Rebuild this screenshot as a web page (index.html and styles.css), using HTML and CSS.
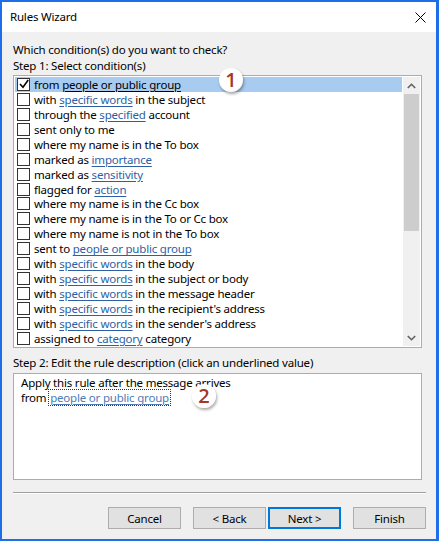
FILE: index.html
```html
<!DOCTYPE html>
<html>
<head>
<meta charset="utf-8">
<link rel="stylesheet" href="styles.css">
</head>
<body>
<div class="window">
  <div class="titlebar">
    <span class="title">Rules Wizard</span>
    <svg class="close" width="11" height="11" viewBox="0 0 11 11"><path d="M0.5 0.5 L10.5 10.5 M10.5 0.5 L0.5 10.5" stroke="#000" stroke-width="1" fill="none"/></svg>
  </div>
  <div class="content">
    <div class="label prompt">Which condition(s) do you want to check?</div>
    <div class="label">Step 1: Select condition(s)</div>
    <div class="listbox">
      <div class="rows">
        <div class="row selected"><span class="cb checked"><svg width="10" height="10" viewBox="0 0 10 10"><path d="M1 5 L4 8.2 L9.2 1" stroke="#000" stroke-width="1.6" fill="none"/></svg></span><span class="txt">from <u class="sel-link">people or public group</u></span></div>
        <div class="row"><span class="cb"></span><span class="txt">with <a>specific words</a> in the subject</span></div>
        <div class="row"><span class="cb"></span><span class="txt">through the <a>specified</a> account</span></div>
        <div class="row"><span class="cb"></span><span class="txt">sent only to me</span></div>
        <div class="row"><span class="cb"></span><span class="txt">where my name is in the To box</span></div>
        <div class="row"><span class="cb"></span><span class="txt">marked as <a>importance</a></span></div>
        <div class="row"><span class="cb"></span><span class="txt">marked as <a>sensitivity</a></span></div>
        <div class="row"><span class="cb"></span><span class="txt">flagged for <a>action</a></span></div>
        <div class="row"><span class="cb"></span><span class="txt">where my name is in the Cc box</span></div>
        <div class="row"><span class="cb"></span><span class="txt">where my name is in the To or Cc box</span></div>
        <div class="row"><span class="cb"></span><span class="txt">where my name is not in the To box</span></div>
        <div class="row"><span class="cb"></span><span class="txt">sent to <a>people or public group</a></span></div>
        <div class="row"><span class="cb"></span><span class="txt">with <a>specific words</a> in the body</span></div>
        <div class="row"><span class="cb"></span><span class="txt">with <a>specific words</a> in the subject or body</span></div>
        <div class="row"><span class="cb"></span><span class="txt">with <a>specific words</a> in the message header</span></div>
        <div class="row"><span class="cb"></span><span class="txt">with <a>specific words</a> in the recipient's address</span></div>
        <div class="row"><span class="cb"></span><span class="txt">with <a>specific words</a> in the sender's address</span></div>
        <div class="row"><span class="cb"></span><span class="txt">assigned to <a>category</a> category</span></div>
      </div>
      <div class="scrollbar">
        <div class="arrow"><svg width="9" height="6" viewBox="0 0 9 6"><path d="M0.8 5 L4.5 1.3 L8.2 5" stroke="#606060" stroke-width="1.6" fill="none"/></svg></div>
        <div class="track"><div class="thumb"></div></div>
        <div class="arrow"><svg width="9" height="6" viewBox="0 0 9 6"><path d="M0.8 1 L4.5 4.7 L8.2 1" stroke="#606060" stroke-width="1.6" fill="none"/></svg></div>
      </div>
    </div>
    <div class="label step2">Step 2: Edit the rule description (click an underlined value)</div>
    <div class="descbox">
      <div>Apply this rule after the message arrives</div>
      <div>from <span class="focus"><a class="desc-link">people or public group</a></span></div>
    </div>
    <div class="separator"></div>
    <div class="buttons">
      <button class="btn">Cancel</button>
      <button class="btn back">&lt; Back</button>
      <button class="btn default">Next &gt;</button>
      <button class="btn finish">Finish</button>
    </div>
  </div>
  <div class="badge b1">1</div>
  <div class="badge b2">2</div>
</div>
</body>
</html>
```
FILE: styles.css
```css
* { box-sizing: border-box; }
html, body { margin: 0; padding: 0; }
body {
  font-family: "Noto Sans", "DejaVu Sans", sans-serif;
  font-size: 11.5px;
  letter-spacing: -0.2px;
  color: #000;
  background: #fff;
}
.window {
  position: relative;
  width: 439px;
  height: 541px;
  background: #f0f0f0;
  border-style: solid;
  border-color: #1d6ee8;
  border-width: 2px 3px 2px 2px;
  display: flex;
  flex-direction: column;
}
.titlebar {
  height: 30px;
  background: #fff;
  display: flex;
  align-items: center;
  justify-content: space-between;
  padding: 0 10px 0 8px;
}
.title { font-size: 11.5px; line-height: 16px; }
.close { display: block; margin-top: 1px; }
.content {
  padding: 10px 0 0 11px;
  display: flex;
  flex-direction: column;
}
.label { line-height: 16px; white-space: nowrap; }
.listbox {
  margin-top: 1px;
  width: 409px;
  height: 273px;
  background: #fff;
  border: 1px solid #acacac;
  padding: 1px;
  display: flex;
}
.rows { flex: 1; display: flex; flex-direction: column; }
.row {
  height: 15px;
  line-height: 15px;
  display: flex;
  align-items: center;
  white-space: nowrap;
  padding-left: 2px;
  overflow: hidden;
}
.txt { display: block; height: 15px; line-height: 15px; }
.row.selected { background: #a8cbf0; margin-right: 1px; }
.cb {
  width: 13px;
  height: 13px;
  border: 1px solid #333;
  background: #fff;
  margin-right: 4px;
  display: flex;
  align-items: center;
  justify-content: center;
  flex: none;
}
.cb svg { display: block; }
a, .sel-link {
  color: #2c5fa5;
  text-decoration: underline;
  text-underline-offset: 2px;
}
.sel-link { color: #000; }
.scrollbar {
  width: 17px;
  background: #f0f0f0;
  display: flex;
  flex-direction: column;
}
.arrow {
  height: 17px;
  display: flex;
  align-items: center;
  justify-content: center;
}
.track { flex: 1; }
.thumb {
  margin: 0 1px;
  height: 137px;
  background: #cdcdcd;
}
.step2 { margin-top: 7px; }
.descbox {
  margin-top: 2px;
  width: 409px;
  height: 107px;
  background: #fff;
  border: 1px solid #acacac;
  padding: 1px 0 0 7px;
  line-height: 15px;
}
.focus {
  outline: 1px dotted #333;
  outline-offset: 0;
  padding: 0 1px;
}
.desc-link { color: #4c7cb8; }
.separator {
  margin-top: 12px;
  width: 413px;
  height: 2px;
  border-top: 1px solid #a0a0a0;
  border-bottom: 1px solid #fff;
}
.buttons {
  margin-top: 13px;
  width: 413px;
  display: flex;
  justify-content: flex-end;
}
.btn {
  width: 73px;
  height: 22px;
  font-family: inherit;
  font-size: 11.5px;
  letter-spacing: -0.2px;
  color: #000;
  background: #e1e1e1;
  border: 1px solid #adadad;
  padding: 0;
  margin: 0;
}
.btn.back { margin-left: 12px; }
.btn.default { margin-left: 2px; border: 2px solid #0078d7; }
.btn.finish { margin-left: 12px; }
.badge {
  position: absolute;
  width: 24px;
  height: 24px;
  border-radius: 50%;
  background: radial-gradient(circle at 45% 40%, #fff 60%, #eee 100%);
  box-shadow: 1px 2px 3px rgba(0,0,0,0.35);
  color: #a33826;
  font-family: "Open Sans", "Noto Sans", sans-serif;
  font-size: 20px;
  font-weight: 600;
  letter-spacing: 0;
  line-height: 24px;
  text-align: center;
}
.b1 { left: 217px; top: 66px; }
.b2 { left: 190px; top: 382px; }
```
